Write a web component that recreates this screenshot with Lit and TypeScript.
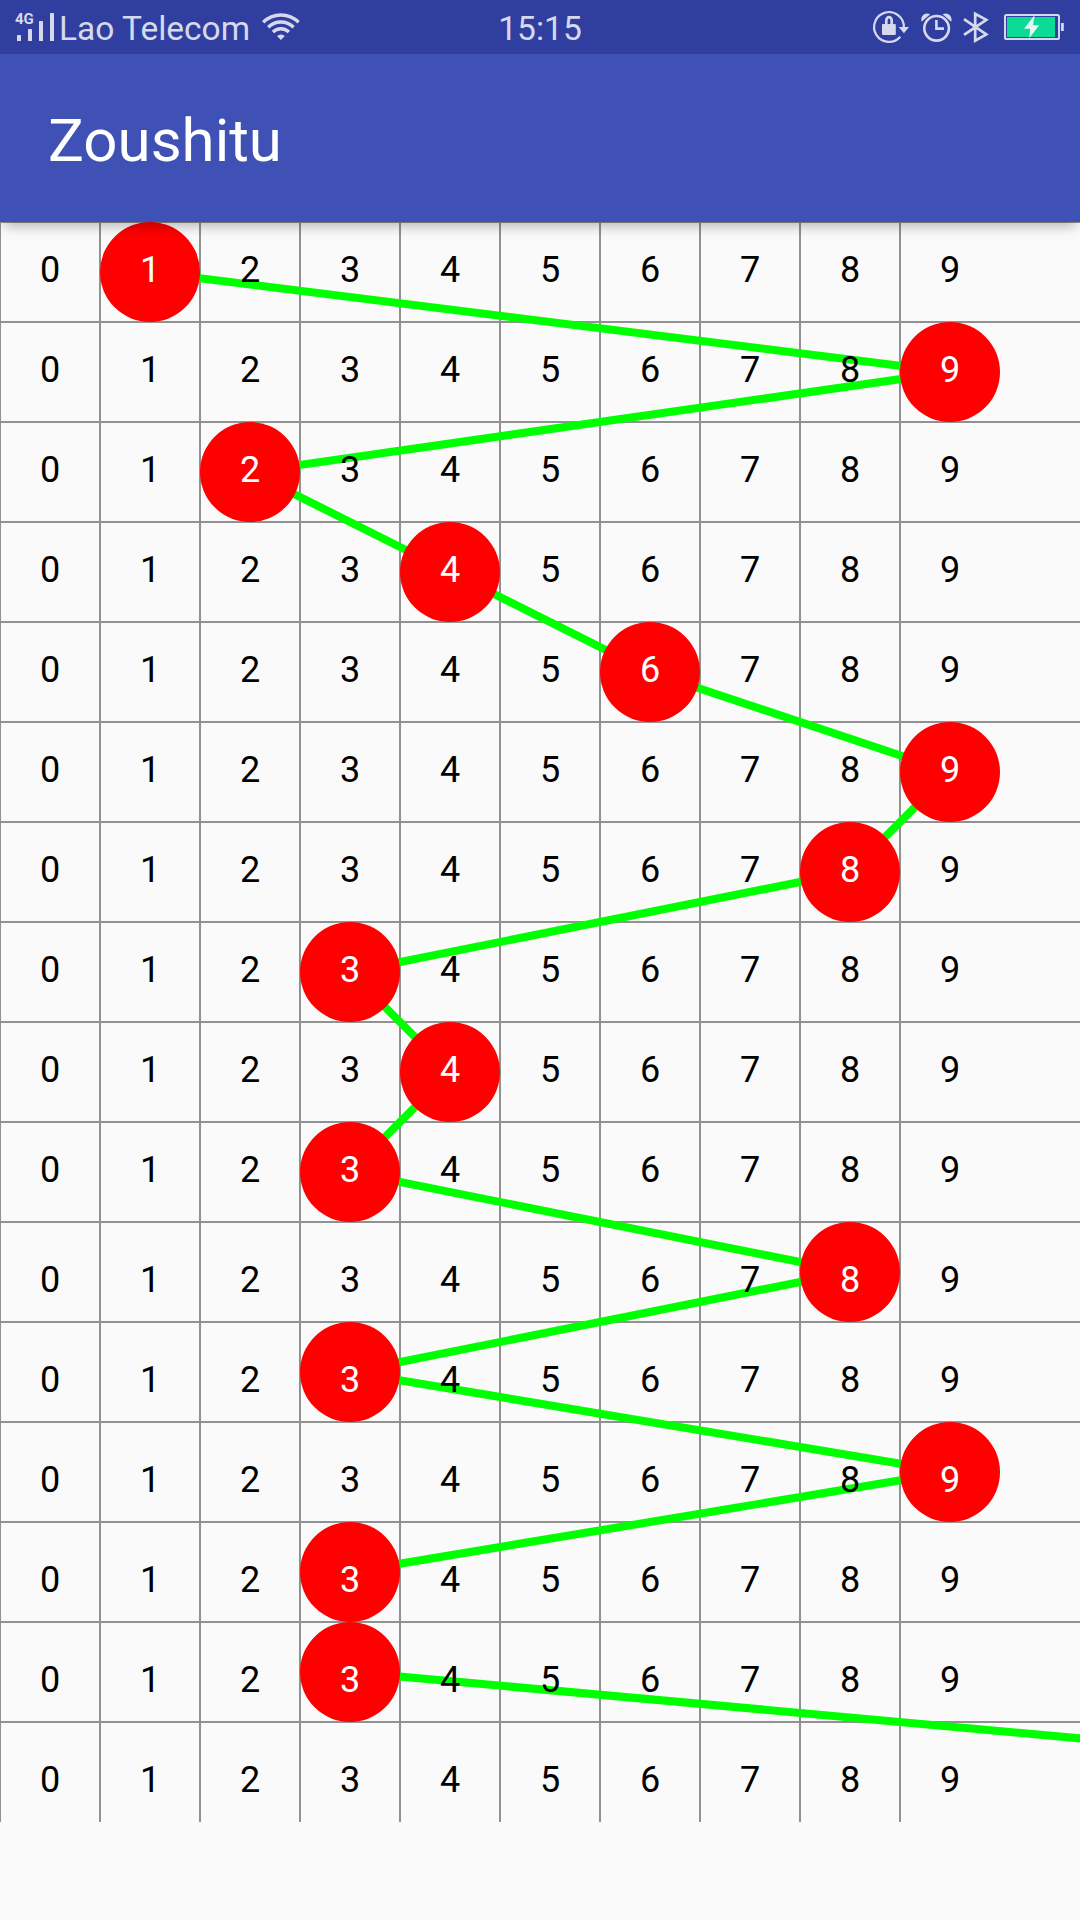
import { LitElement, html, svg, css } from "lit";
import { customElement, property } from "lit/decorators.js";
import { classMap } from "lit/directives/class-map.js";

const CELL = 100;
const COLUMNS = 10;
const DIGITS = Array.from({ length: COLUMNS }, (_, i) => i);

@customElement("status-bar")
class StatusBar extends LitElement {
  static styles = css`
    :host {
      display: grid;
      grid-template-columns: 1fr auto 1fr;
      height: 54px;
      background: #303f9f;
      color: #d6d9ec;
      font: 33.5px/57px Roboto, sans-serif;
    }
    .left,
    .right {
      display: flex;
    }
    .right {
      justify-content: flex-end;
    }
    .carrier {
      white-space: nowrap;
    }
    .icon {
      display: block;
      flex: none;
      fill: currentColor;
    }
    .network {
      font: 700 15px Roboto, sans-serif;
    }
    .stroke {
      fill: none;
      stroke: currentColor;
    }
    .charge {
      fill: #0adb97;
    }
    .bolt {
      fill: #e6f8f5;
      stroke: none;
    }
  `;

  render() {
    return html`
      <div class="left">
        <svg class="icon" width="59" height="54" viewBox="0 0 59 54">
          <text class="network" x="15" y="24">4G</text>
          <rect x="17" y="35" width="4" height="6" rx=".6" />
          <rect x="28" y="29" width="4" height="12" rx=".6" />
          <rect x="39" y="21" width="4" height="20" rx=".6" />
          <rect x="50" y="13" width="4" height="28" rx=".6" />
        </svg>
        <span class="carrier">Lao Telecom</span>
        <svg class="icon" width="54" height="54" viewBox="250 0 54 54">
          <g class="stroke" stroke-width="3.4">
            <path d="M263.2 22.3A25 25 0 0 1 298.6 22.3" />
            <path d="M268.2 27.3A18 18 0 0 1 293.6 27.3" />
            <path d="M272.9 32A11.3 11.3 0 0 1 288.9 32" />
          </g>
          <path d="M280.9 40L277 36.1A5.6 5.6 0 0 1 284.8 36.1Z" />
        </svg>
      </div>
      <span>15:15</span>
      <div class="right">
        <svg class="icon" width="220" height="54" viewBox="0 0 220 54">
          <path class="stroke" stroke-width="2.2" d="M40.3 36.7A14.9 14.9 0 1 1 43.9 27.5" />
          <path d="M38.7 27H49L43.9 33.2Z" />
          <rect x="22" y="24" width="13.8" height="11" rx="1" />
          <path class="stroke" stroke-width="2.7" d="M26.3 25V20.5A2.6 3.2 0 0 1 31.7 20.5V25" />
          <circle class="stroke" stroke-width="2.6" cx="76.6" cy="28.3" r="12.3" />
          <path class="stroke" stroke-width="2.6" d="M76.4 20V28.6H84" />
          <path d="M61.6 21.8C60 16.4 64.6 11.6 70.2 14.2Z" />
          <path d="M91.2 21.8C92.8 16.4 88.2 11.6 82.6 14.2Z" />
          <path class="stroke" stroke-width="2.7" d="M104 19.2L126.3 34.3L115.2 40.6V13.8L126.3 19.9L104 34.9" />
          <rect class="stroke" stroke-width="2" x="145" y="15" width="54" height="24" rx="1.6" />
          <rect class="charge" x="147" y="17" width="48" height="20" />
          <path class="bolt" d="M174.7 15L164 28.8H170.2L169.2 38.3L179.2 25.2H173Z" />
          <rect x="201" y="23" width="2.8" height="8" />
        </svg>
      </div>
    `;
  }
}

@customElement("trend-chart")
class TrendChart extends LitElement {
  @property({ attribute: false }) picks: number[] = [];

  static styles = css`
    :host {
      display: block;
      position: relative;
      font: 36px/96px Roboto, sans-serif;
      color: #000;
    }
    .plot {
      position: absolute;
      top: 0;
      left: 0;
      display: block;
    }
    .grid {
      stroke: #919191;
      stroke-width: 2;
    }
    .trend {
      fill: none;
      stroke: #00ff00;
      stroke-width: 8;
    }
    .ball {
      fill: #ff0000;
    }
    .row {
      position: relative;
      display: grid;
      grid-template-columns: repeat(10, 100px);
      height: 100px;
      box-sizing: border-box;
      text-align: center;
    }
    .row.low {
      padding-top: 10px;
    }
    .picked {
      color: #fff;
    }
  `;

  render() {
    const rows = this.picks.length;
    const height = rows * CELL;
    const centre = (i: number) => i * CELL + CELL / 2;
    const points = this.picks.map((p, r) => `${centre(p)},${centre(r)}`).join(" ");
    return html`
      <svg class="plot" width="1080" height=${height}>
        <g class="grid">
          ${this.picks.map((_, r) => svg`<line x1="0" x2="1080" y1=${r * CELL} y2=${r * CELL} />`)}
          ${DIGITS.map((c) => svg`<line x1=${c * CELL} x2=${c * CELL} y1="0" y2=${height} />`)}
        </g>
        <polyline class="trend" points=${points} />
        ${this.picks.map((p, r) => svg`<circle class="ball" cx=${centre(p)} cy=${centre(r)} r="50" />`)}
      </svg>
      ${this.picks.map(
        (pick, r) => html`
          <div class=${classMap({ row: true, low: r > 9 })}>
            ${DIGITS.map((d) => html`<span class=${classMap({ picked: d === pick })}>${d}</span>`)}
          </div>
        `
      )}
    `;
  }
}

@customElement("app-root")
class AppRoot extends LitElement {
  static styles = css`
    :host {
      display: flex;
      flex-direction: column;
      height: 1920px;
      overflow: hidden;
      background: #fafafa;
    }
    .bar {
      position: relative;
      z-index: 1;
      flex: none;
      height: 168px;
      box-sizing: border-box;
      padding-left: 48px;
      background: #3f51b5;
      color: #fff;
      font: 60px/173px Roboto, sans-serif;
      box-shadow: 0 8px 12px -4px rgba(0, 0, 0, 0.28);
    }
    status-bar {
      position: relative;
      z-index: 2;
      flex: none;
    }
  `;

  // The last draw lies beyond the visible columns, so its line runs off the edge.
  private picks = [1, 9, 2, 4, 6, 9, 8, 3, 4, 3, 8, 3, 9, 3, 3, 14];

  render() {
    return html`
      <status-bar></status-bar>
      <div class="bar">Zoushitu</div>
      <trend-chart .picks=${this.picks}></trend-chart>
    `;
  }
}
